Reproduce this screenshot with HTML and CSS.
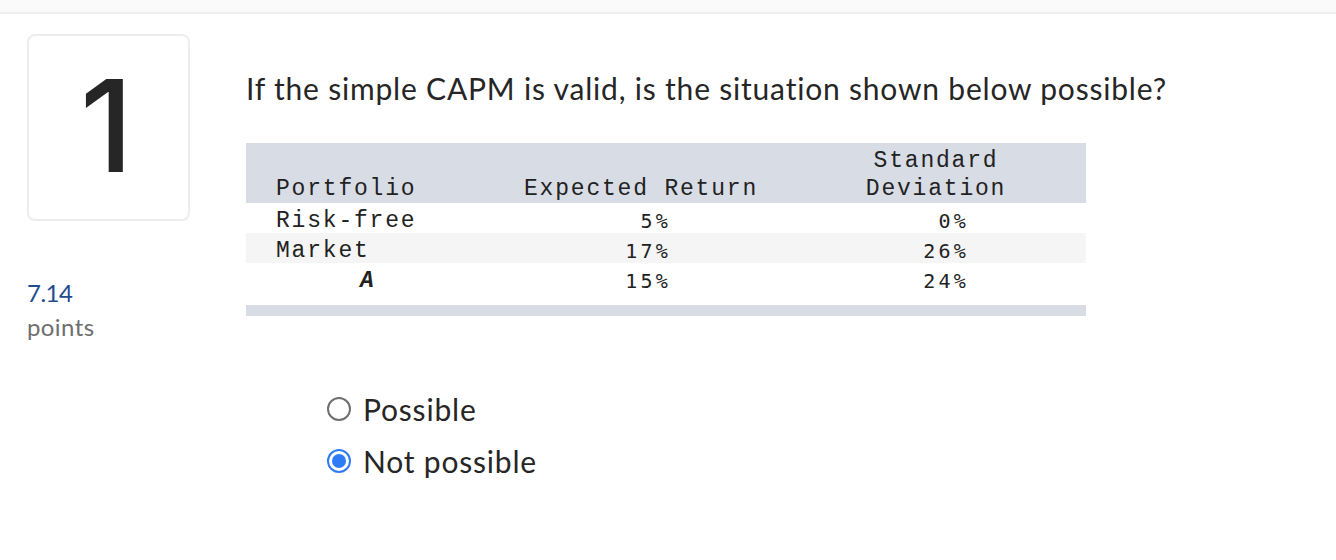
FILE: index.html
```html
<!DOCTYPE html>
<html lang="en">
<head>
<meta charset="utf-8">
<title>Question 1</title>
<link rel="stylesheet" href="styles.css">
</head>
<body>
<div class="topbar"></div>
<div class="question">
  <aside class="side">
    <div class="numbox"><span class="num">1</span></div>
    <div class="pts">
      <div class="pts-val">7.14</div>
      <div class="pts-label">points</div>
    </div>
  </aside>
  <section class="content">
    <p class="prompt">If the simple CAPM is valid, is the situation shown below possible?</p>
    <div class="tablewrap">
      <table class="data">
        <colgroup>
          <col class="c1"><col class="c2"><col class="c3">
        </colgroup>
        <thead>
          <tr>
            <th class="h-left">Portfolio</th>
            <th class="h-center">Expected Return</th>
            <th class="h-center">Standard<br>Deviation</th>
          </tr>
        </thead>
        <tbody>
          <tr>
            <td class="name">Risk-free</td>
            <td class="num-cell r2">5%</td>
            <td class="num-cell r3">0%</td>
          </tr>
          <tr class="alt">
            <td class="name">Market</td>
            <td class="num-cell r2">17%</td>
            <td class="num-cell r3">26%</td>
          </tr>
          <tr>
            <td class="name"><span class="ital">A</span></td>
            <td class="num-cell r2">15%</td>
            <td class="num-cell r3">24%</td>
          </tr>
        </tbody>
      </table>
      <div class="tablebar"></div>
    </div>
    <div class="choices">
      <label class="choice"><span class="radio"></span><span class="choice-text">Possible</span></label>
      <label class="choice"><span class="radio checked"></span><span class="choice-text">Not possible</span></label>
    </div>
  </section>
</div>
</body>
</html>
```
FILE: styles.css
```css
html, body {
  margin: 0;
  padding: 0;
  background: #ffffff;
}
body {
  font-family: "Lato", "Open Sans", sans-serif;
  color: #262626;
}
.topbar {
  height: 12px;
  background: #fafafa;
  border-bottom: 2px solid #eeeeee;
}
.question {
  display: flex;
  padding: 20px 0 0 27px;
  gap: 56px;
}
.side {
  width: 163px;
  flex: none;
}
.numbox {
  box-sizing: border-box;
  width: 163px;
  height: 187px;
  border: 2px solid #ededed;
  border-radius: 8px;
  display: flex;
  align-items: center;
  justify-content: center;
}
.num {
  font-family: "Inter", "Noto Sans", sans-serif;
  font-size: 128px;
  font-weight: 500;
  line-height: 1;
  color: #262626;
  margin-left: -4px;
  margin-top: -3px;
}
.pts {
  margin-top: 57px;
}
.pts-val {
  font-size: 24px;
  line-height: 30px;
  color: #1f4d8c;
  letter-spacing: -0.5px;
}
.pts-label {
  font-size: 24px;
  line-height: 38px;
  color: #6e6e6e;
  letter-spacing: 0.4px;
}
.content {
  flex: 1;
}
.prompt {
  margin: 35px 0 0 0;
  font-size: 30px;
  line-height: 38px;
  letter-spacing: 0.8px;
}
.tablewrap {
  width: 840px;
  margin-top: 36px;
}
.data {
  width: 840px;
  border-collapse: collapse;
  table-layout: fixed;
  font-family: "Liberation Mono", "Courier New", monospace;
  font-size: 23px;
  letter-spacing: 1.8px;
  color: #222222;
}
.c1 { width: 250px; }
.c2 { width: 290px; }
.c3 { width: 300px; }
.data thead tr {
  background: #d8dce5;
}
.data th {
  font-weight: normal;
  line-height: 28px;
  padding: 4px 0 0 0;
  vertical-align: bottom;
}
.h-left {
  text-align: left;
  padding-left: 30px !important;
}
.h-center {
  text-align: center;
}
.data td {
  line-height: 24px;
  padding: 6px 0 0 0;
}
.data tr.alt {
  background: #f5f5f5;
}
.name {
  padding-left: 30px !important;
}
.ital {
  font-style: italic;
  font-weight: bold;
  padding-left: 84px;
}
.num-cell {
  font-family: "DejaVu Sans Mono", monospace;
  font-size: 20px;
  letter-spacing: 3.2px;
  text-align: right;
}
.r2 { padding-right: 115px !important; }
.r3 { padding-right: 117px !important; }
.tablebar {
  height: 11px;
  margin-top: 12px;
  background: #d8dce5;
}
.choices {
  display: flex;
  flex-direction: column;
  gap: 16px;
  margin: 75px 0 0 81px;
}
.choice {
  display: flex;
  align-items: center;
  gap: 12px;
  height: 36px;
}
.radio {
  box-sizing: border-box;
  width: 24px;
  height: 24px;
  border: 2px solid #6f6f6f;
  border-radius: 50%;
  flex: none;
  display: flex;
  align-items: center;
  justify-content: center;
}
.radio.checked {
  border-color: #2f7bf6;
}
.radio.checked::after {
  content: "";
  width: 14px;
  height: 14px;
  border-radius: 50%;
  background: #2f7bf6;
}
.choice-text {
  font-size: 30px;
  line-height: 36px;
  letter-spacing: 0.8px;
  color: #262626;
}
```
